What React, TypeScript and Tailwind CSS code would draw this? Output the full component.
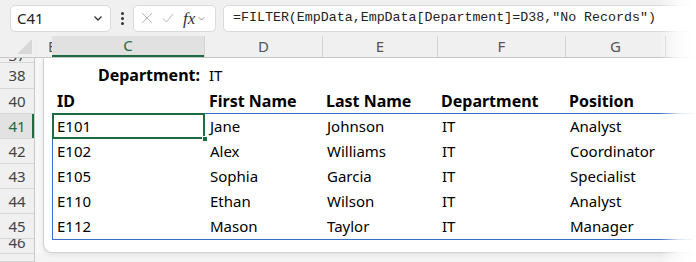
import React from "react";

const rows = [
  { id: "E101", first: "Jane", last: "Johnson", dept: "IT", pos: "Analyst" },
  { id: "E102", first: "Alex", last: "Williams", dept: "IT", pos: "Coordinator" },
  { id: "E105", first: "Sophia", last: "Garcia", dept: "IT", pos: "Specialist" },
  { id: "E110", first: "Ethan", last: "Wilson", dept: "IT", pos: "Analyst" },
  { id: "E112", first: "Mason", last: "Taylor", dept: "IT", pos: "Manager" },
];

function Chevron({ className }: { className?: string }) {
  return (
    <svg viewBox="0 0 12 12" className={className} fill="none" stroke="currentColor" strokeWidth="1.3">
      <path d="M2.5 4.5 6 8l3.5-3.5" />
    </svg>
  );
}

function RowHead({ n, h, active, clipTop, clipBottom }: { n?: string; h: string; active?: boolean; clipTop?: boolean; clipBottom?: boolean }) {
  return (
    <div
      className={`${h} relative flex justify-center overflow-hidden border-b border-[#d6d6d6] ${
        active ? "bg-[#e2e2e2] text-[#1e6b41]" : "text-[#444]"
      } ${clipTop ? "items-end" : clipBottom ? "items-start" : "items-center"}`}
    >
      <span className={`leading-none ${clipTop ? "-mb-[1px]" : ""} ${clipBottom ? "-mt-[4px]" : ""}`}>{n}</span>
      {active && <div className="absolute right-0 top-0 h-full w-[2px] bg-[#1e6b41]" />}
    </div>
  );
}

export default function App() {
  return (
    <div
      className="relative w-[696px] h-[262px] overflow-hidden bg-[#f0f0f0] text-[15px] text-black"
      style={{ fontFamily: '"Noto Sans", "Open Sans", sans-serif' }}
    >
      {/* toolbar */}
      <div className="h-[36px] flex items-center pl-[10px]">
        <div className="w-[101px] h-[27px] bg-white border border-[#dadada] rounded-[5px] flex items-center justify-between pl-[6px] pr-[6px] text-[15px] text-[#222]">
          <span>C41</span>
          <Chevron className="w-[12px] h-[12px] text-[#333]" />
        </div>
        <div className="w-[22px] flex flex-col items-center gap-[2px]">
          <span className="w-[3px] h-[3px] rounded-full bg-[#333]" />
          <span className="w-[3px] h-[3px] rounded-full bg-[#333]" />
          <span className="w-[3px] h-[3px] rounded-full bg-[#333]" />
        </div>
        <div className="w-[83px] h-[27px] bg-white border border-[#dadada] rounded-[5px] flex items-center pl-[7px] gap-[9px]">
          <svg viewBox="0 0 12 12" className="w-[12px] h-[12px]" fill="none" stroke="#b8b8b8" strokeWidth="1">
            <path d="M1 1l10 10M11 1 1 11" />
          </svg>
          <svg viewBox="0 0 12 12" className="w-[12px] h-[12px]" fill="none" stroke="#b8b8b8" strokeWidth="1">
            <path d="M1 6.5 4.5 10 11 2" />
          </svg>
          <div className="flex items-center gap-[2px]">
            <span className="italic text-[17px] text-[#333] leading-none" style={{ fontFamily: '"Liberation Serif", serif' }}>
              fx
            </span>
            <Chevron className="w-[9px] h-[9px] text-[#888]" />
          </div>
        </div>
        <div className="ml-[7px] flex-1 h-[27px] bg-white border border-[#dadada] rounded-l-[5px] flex items-center pl-[9px] text-[13.3px] text-[#222]" style={{ fontFamily: '"Liberation Mono", monospace' }}>
          =FILTER(EmpData,EmpData[Department]=D38,"No Records")
        </div>
      </div>

      {/* column headers */}
      <div className="h-[22px] flex border-b border-[#c8c8c8] text-[#555] text-[15px] bg-[#f0f0f0]">
        <div className="w-[35px] relative">
          <svg viewBox="0 0 16 16" className="absolute left-[17px] top-[3px] w-[15px] h-[15px]">
            <path d="M16 0 16 16 0 16Z" fill="#d8d8d8" />
          </svg>
        </div>
        <div className="w-[17px] relative overflow-hidden border-l border-[#ededed]">
          <span className="absolute left-[12px] top-[0px] leading-[21px]">B</span>
        </div>
        <div className="w-[152px] flex items-center justify-center bg-[#e1e1e1] text-[#1e6b41] border-b-[2px] border-[#1e6b41]">C</div>
        <div className="w-[118px] flex items-center justify-center border-l border-[#d4d4d4]">D</div>
        <div className="w-[115px] flex items-center justify-center border-l border-[#d4d4d4]">E</div>
        <div className="w-[128px] flex items-center justify-center border-l border-[#d4d4d4]">F</div>
        <div className="w-[100px] flex items-center justify-center border-l border-[#d4d4d4]">G</div>
        <div className="flex-1 border-l border-[#d4d4d4]" />
      </div>

      {/* body */}
      <div className="flex h-[204px]">
        <div className="w-[35px] flex flex-col text-[15px] bg-[#f0f0f0] border-r border-[#c8c8c8]">
          <RowHead n="37" h="h-[5px]" clipTop />
          <RowHead n="38" h="h-[26px]" />
          <RowHead n="40" h="h-[25px]" />
          <RowHead n="41" h="h-[25px]" active />
          <RowHead n="42" h="h-[25px]" />
          <RowHead n="43" h="h-[25px]" />
          <RowHead n="44" h="h-[25px]" />
          <RowHead n="45" h="h-[25px]" />
          <RowHead n="46" h="h-[15px]" clipBottom />
          <RowHead h="h-[8px]" />
        </div>

        <div className="flex-1 flex flex-col bg-[#f4f4f4]">
          <div className="flex h-[195px]">
            <div className="w-[8px] bg-[#f7f7f7]" />
            <div className="flex-1 bg-white rounded-bl-[9px] border-l border-b border-[#d2d2d2] shadow-[0_2px_4px_rgba(0,0,0,0.08)] pl-[8px] relative">
              <div className="h-[4px]" />
              {/* row 38 */}
              <div className="h-[26px] flex items-center">
                <div className="w-[152px] text-right pr-[4px] font-bold text-[16px]">Department:</div>
                <div className="pl-[5px]">IT</div>
              </div>
              {/* row 40 header */}
              <div className="h-[25px] flex items-center font-bold text-[16px]">
                <div className="w-[152px] pl-[5px]">ID</div>
                <div className="w-[118px] pl-[5px]">First Name</div>
                <div className="w-[115px] pl-[4px]">Last Name</div>
                <div className="w-[128px] pl-[4px]">Department</div>
                <div className="pl-[4px]">Position</div>
              </div>
              {/* spill range */}
              <div className="relative border-l border-t border-b border-[#3a6ec6]">
                {rows.map((r) => (
                  <div key={r.id} className="h-[25px] flex items-center">
                    <div className="w-[152px] pl-[4px]">{r.id}</div>
                    <div className="w-[118px] pl-[5px]">{r.first}</div>
                    <div className="w-[115px] pl-[4px]">{r.last}</div>
                    <div className="w-[128px] pl-[4px]">{r.dept}</div>
                    <div className="pl-[4px]">{r.pos}</div>
                  </div>
                ))}
                <div className="absolute -left-[1px] -top-[1px] w-[153px] h-[26px] border-2 border-[#1e6b41]" />
                <div className="absolute left-[149px] top-[22px] w-[6px] h-[6px] bg-[#1e6b41] border border-white" />
              </div>
            </div>
          </div>
        </div>
      </div>

      {/* right fade */}
      <div className="absolute right-0 top-0 h-full w-[36px] bg-gradient-to-r from-transparent via-white/80 to-white" />
    </div>
  );
}
